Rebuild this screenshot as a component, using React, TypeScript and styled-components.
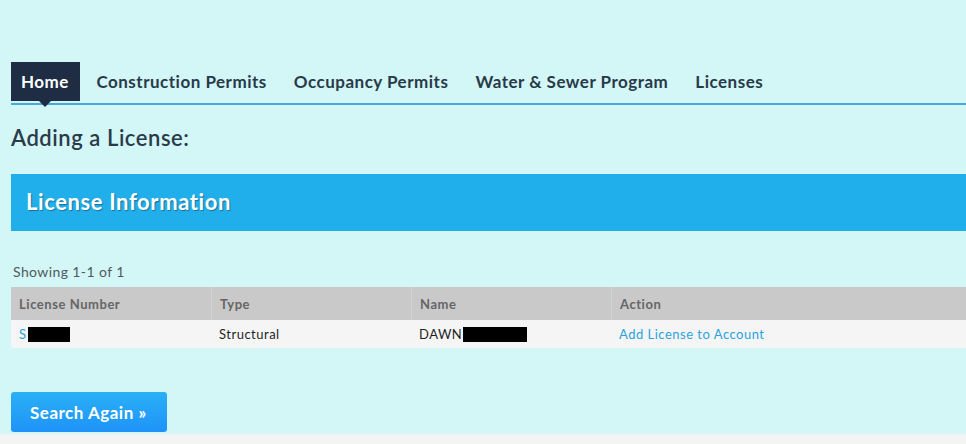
import React from "react";
import styled, { createGlobalStyle } from "styled-components";

const Global = createGlobalStyle`
  html, body { margin: 0; padding: 0; background: #d3f6f6; }
  body { font-family: Lato, "Open Sans", "Liberation Sans", sans-serif; color: #2b3a4a; }
`;

const Page = styled.div`
  width: 966px;
  height: 444px;
  overflow: hidden;
  background: #d3f6f6;
  display: flex;
  flex-direction: column;
`;

const Content = styled.div`
  padding: 62px 0 0 11px;
  display: flex;
  flex-direction: column;
`;

const Nav = styled.nav`
  display: flex;
  align-items: stretch;
  height: 41px;
  border-bottom: 2px solid #4aa9da;
  position: relative;
`;

const Tab = styled.a<{ $active?: boolean }>`
  display: flex;
  align-items: center;
  padding: 0 ${(p) => (p.$active ? "11px" : "13.5px")} 0 ${(p) => (p.$active ? "10px" : "13.5px")};
  margin-right: ${(p) => (p.$active ? "3px" : "0")};
  font-size: 17px;
  font-weight: 700;
  color: ${(p) => (p.$active ? "#ffffff" : "#283a4a")};
  background: ${(p) => (p.$active ? "#1e2d43" : "transparent")};
  position: relative;
  text-decoration: none;
  letter-spacing: 0.5px;
  margin-bottom: 2px;
  ${(p) =>
    p.$active &&
    `
    &::after {
      content: "";
      position: absolute;
      left: 50%;
      bottom: -6px;
      margin-left: -6px;
      border-left: 6px solid transparent;
      border-right: 6px solid transparent;
      border-top: 6px solid #1e2d43;
    }
  `}
`;

const Heading = styled.h1`
  margin: 19px 0 0 0;
  font-size: 22px;
  font-weight: 600;
  letter-spacing: 0.55px;
  color: #2b3a4a;
  line-height: 28px;
`;

const Banner = styled.div`
  margin-top: 22px;
  height: 57px;
  box-sizing: border-box;
  padding: 0 0 3px 15px;
  background: #21afeb;
  display: flex;
  align-items: center;
  font-size: 22px;
  font-weight: 700;
  letter-spacing: 0.6px;
  color: #ffffff;
  text-shadow: 1px 1px 1px rgba(0, 0, 0, 0.35);
`;

const Showing = styled.div`
  margin: 33px 0 0 2px;
  font-size: 14px;
  letter-spacing: 0.4px;
  color: #4f5a60;
  line-height: 16px;
`;

const Table = styled.div`
  margin-top: 7px;
  display: flex;
  flex-direction: column;
`;

const HeadRow = styled.div`
  display: grid;
  grid-template-columns: 200px 200px 200px 1fr;
  height: 33px;
  background: #c9c9c9;
`;

const HeadCell = styled.div`
  display: flex;
  align-items: center;
  padding-left: 8px;
  font-size: 13px;
  font-weight: 700;
  letter-spacing: 0.55px;
  color: #656565;
  border-left: 1px solid #d2d2d2;
  &:first-child { border-left: none; }
`;

const BodyRow = styled.div`
  display: grid;
  grid-template-columns: 200px 200px 200px 1fr;
  height: 28px;
  background: #f5f5f5;
`;

const Cell = styled.div`
  display: flex;
  align-items: center;
  padding-left: 8px;
  font-size: 13px;
  letter-spacing: 0.5px;
  color: #1f1f1f;
`;

const Link = styled.a`
  color: #2aa3dd;
  text-decoration: none;
  font-size: 13px;
`;

const Redact = styled.span<{ $w: number }>`
  display: inline-block;
  width: ${(p) => p.$w}px;
  height: 15px;
  background: #000;
  margin-left: 1px;
`;

const Button = styled.button`
  margin-top: 44px;
  width: 156px;
  height: 40px;
  border: none;
  border-radius: 3px;
  background: linear-gradient(to bottom, #2bb0f6, #1e93f9);
  color: #ffffff;
  font-family: inherit;
  font-size: 17px;
  font-weight: 700;
  letter-spacing: 0.5px;
  text-align: left;
  padding-left: 19px;
  cursor: pointer;
`;

const Footer = styled.div`
  margin-top: 2px;
  flex: 1;
  background: #f4f4f4;
`;

export default function App() {
  return (
    <>
      <Global />
      <Page>
        <Content>
          <Nav>
            <Tab $active>Home</Tab>
            <Tab>Construction Permits</Tab>
            <Tab>Occupancy Permits</Tab>
            <Tab>Water &amp; Sewer Program</Tab>
            <Tab>Licenses</Tab>
          </Nav>
          <Heading>Adding a License:</Heading>
          <Banner>License Information</Banner>
          <Showing>Showing 1-1 of 1</Showing>
          <Table>
            <HeadRow>
              <HeadCell>License Number</HeadCell>
              <HeadCell>Type</HeadCell>
              <HeadCell>Name</HeadCell>
              <HeadCell>Action</HeadCell>
            </HeadRow>
            <BodyRow>
              <Cell>
                <Link>S</Link>
                <Redact $w={42} />
              </Cell>
              <Cell>Structural</Cell>
              <Cell>
                DAWN<Redact $w={64} />
              </Cell>
              <Cell>
                <Link>Add License to Account</Link>
              </Cell>
            </BodyRow>
          </Table>
          <Button>Search Again »</Button>
        </Content>
        <Footer />
      </Page>
    </>
  );
}
